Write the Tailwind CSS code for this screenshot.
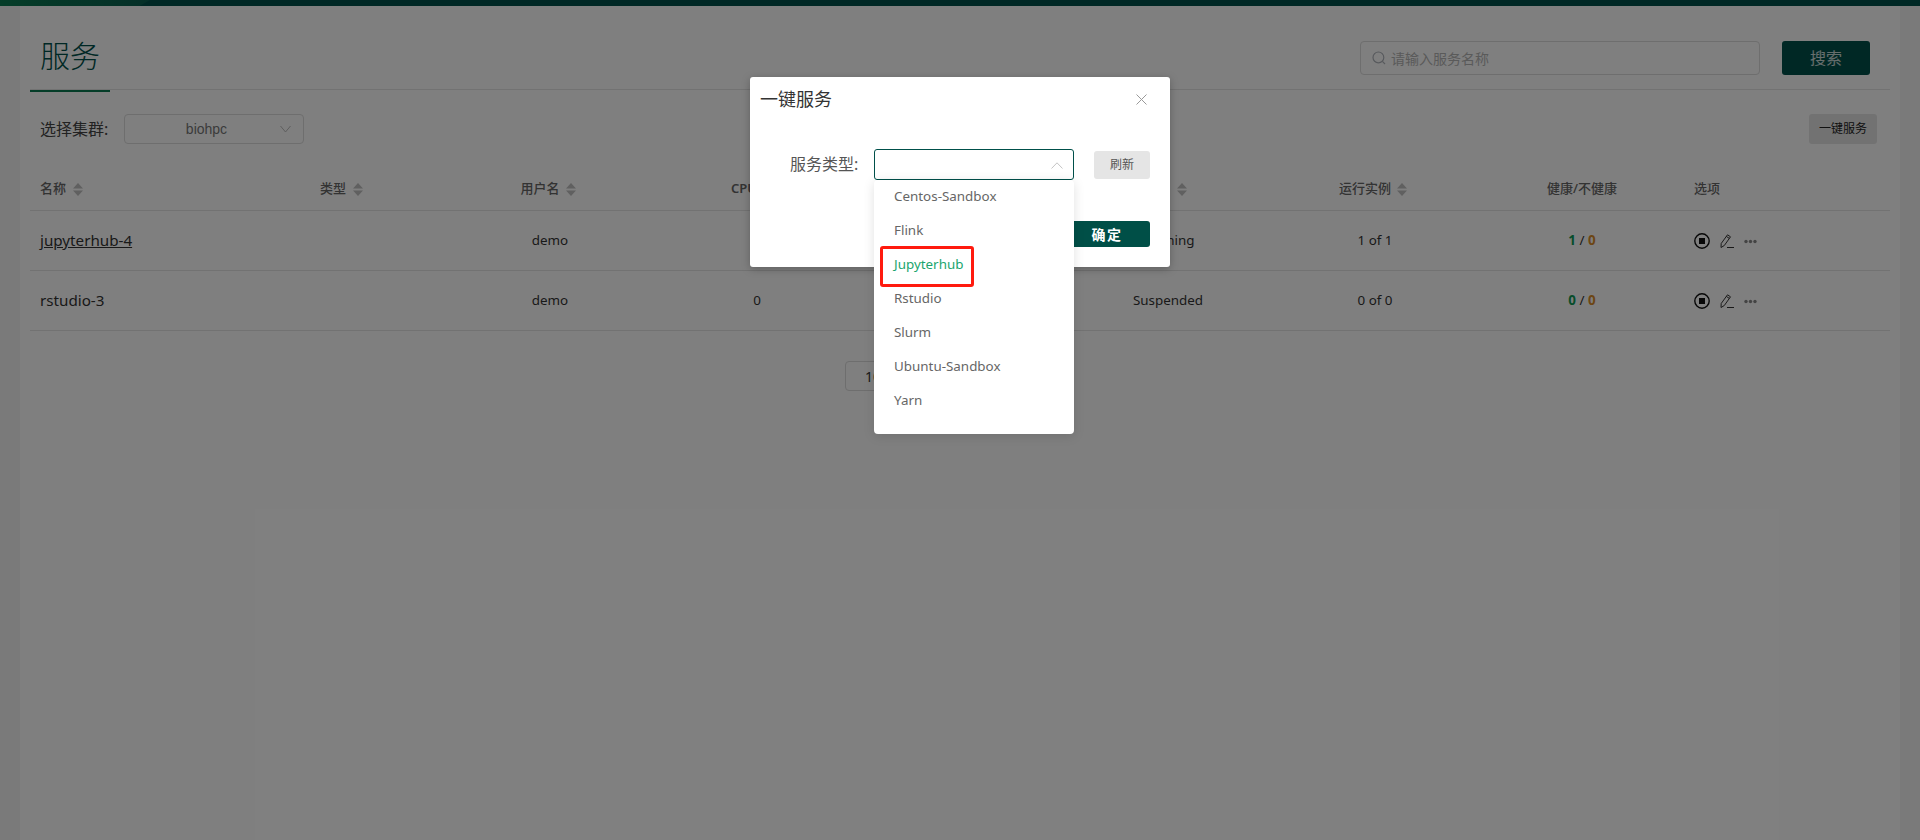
<!DOCTYPE html>
<html lang="zh">
<head>
<meta charset="utf-8">
<title>服务</title>
<script src="https://cdn.jsdelivr.net/npm/@tailwindcss/browser@4"></script>
</head>
<body class="font-['Noto_Sans','Noto_Sans_CJK_SC',sans-serif]">
<div class="relative w-[1920px] h-[840px] overflow-hidden bg-[#f5f5f5] flex flex-col">
  <div class="relative h-[6px] shrink-0 bg-[#00504a]">
    <div class="absolute left-0 top-0 h-[6px] w-[150px] bg-gradient-to-r from-[#0a7a50] to-[#0a5f50] [clip-path:polygon(0_0,100%_0,93%_100%,0_100%)]"></div>
  </div>
  <div class="flex-1 mx-[20px] bg-white px-[10px] flex flex-col">
    <div class="h-[84px] shrink-0 flex items-end justify-between border-b border-[#e4e4e4]">
      <div class="w-[80px] h-[84px] -mb-[3px] border-b-2 border-[#0a7a50] flex items-center justify-center text-[30px] leading-none pt-[14px] font-light text-[#00504a]">服务</div>
      <div class="self-start mt-[35px] mr-[20px] flex gap-[22px]">
        <div class="w-[400px] h-[34px] border border-[#dcdcdc] rounded-[4px] flex items-center pl-[11px] gap-[5px]">
          <svg class="w-[14px] h-[14px] text-[#b0b4bb]" viewBox="0 0 14 14" fill="none" stroke="currentColor" stroke-width="1.2"><circle cx="6.4" cy="6.4" r="5.4"/><path d="M10.4 10.4L13 13"/></svg>
          <span class="text-[14px] text-[#b4b4b4]">请输入服务名称</span>
        </div>
        <div class="w-[88px] h-[34px] rounded-[3px] bg-[#00504a] text-white/80 text-[16px] flex items-center justify-center">搜索</div>
      </div>
    </div>
    <div class="h-[54px] shrink-0 flex items-end justify-between pl-[10px] pr-[13px]">
      <div class="flex items-center">
        <span class="w-[84px] text-[16px] text-[#444]">选择集群:</span>
        <div class="relative w-[180px] h-[30px] border border-[#dcdcdc] rounded-[4px] flex items-center justify-center pr-[15px] text-[14px] font-['Liberation_Sans',sans-serif] text-[#777]">
          biohpc
          <svg class="absolute right-[12px] top-[10px] w-[11px] h-[8px] text-[#bbb]" viewBox="0 0 11 8" fill="none" stroke="currentColor"><path d="M0.5 1L5.5 7L10.5 1"/></svg>
        </div>
      </div>
      <div class="w-[68px] h-[30px] rounded-[3px] bg-[#e5e5e5] text-[12px] text-[#222] flex items-center justify-center">一键服务</div>
    </div>

    <div class="grid grid-cols-[280px_160px_160px_254px_240px_146px_210px_204px_206px] h-[67px] items-end border-b border-[#e4e4e4] text-[13px] font-medium text-[#666] shrink-0">
      <div class="h-[42px] pl-[10px] flex items-center gap-[7px]">名称
        <svg class="w-[10px] h-[13px] text-[#c0c0c0]" viewBox="0 0 10 13" fill="currentColor"><path d="M5 0L10 5.5H0Z"/><path d="M5 13L0 7.5H10Z"/></svg></div>
      <div class="h-[42px] pl-[10px] flex items-center gap-[7px]">类型
        <svg class="w-[10px] h-[13px] text-[#c0c0c0]" viewBox="0 0 10 13" fill="currentColor"><path d="M5 0L10 5.5H0Z"/><path d="M5 13L0 7.5H10Z"/></svg></div>
      <div class="h-[42px] flex items-center justify-center gap-[6px] pr-[4px]">用户名
        <svg class="w-[10px] h-[13px] text-[#c0c0c0]" viewBox="0 0 10 13" fill="currentColor"><path d="M5 0L10 5.5H0Z"/><path d="M5 13L0 7.5H10Z"/></svg></div>
      <div class="h-[42px] flex items-center justify-center font-semibold">CPU核数</div>
      <div class="h-[42px] flex items-center justify-center">内存</div>
      <div class="h-[42px] pl-[10px] flex items-center justify-end gap-[8px] pr-[83px]">状态
        <svg class="w-[10px] h-[13px] text-[#c0c0c0]" viewBox="0 0 10 13" fill="currentColor"><path d="M5 0L10 5.5H0Z"/><path d="M5 13L0 7.5H10Z"/></svg></div>
      <div class="h-[42px] flex items-center justify-center gap-[6px] pr-[4px]">运行实例
        <svg class="w-[10px] h-[13px] text-[#c0c0c0]" viewBox="0 0 10 13" fill="currentColor"><path d="M5 0L10 5.5H0Z"/><path d="M5 13L0 7.5H10Z"/></svg></div>
      <div class="h-[42px] flex items-center justify-center">健康/不健康</div>
      <div class="h-[42px] pl-[10px] flex items-center">选项</div>
    </div>

    <div class="grid grid-cols-[280px_160px_160px_254px_240px_146px_210px_204px_206px] h-[60px] items-center border-b border-[#e4e4e4] text-[13.4px] text-[#333] shrink-0">
      <div class="pl-[10px] text-[15.2px] underline">jupyterhub-4</div>
      <div></div>
      <div class="text-center">demo</div>
      <div class="text-center">1</div>
      <div class="text-center">2G</div>
      <div class="text-center pr-[58px]">Running</div>
      <div class="text-center">1 of 1</div>
      <div class="text-center font-bold"><span class="text-[#0f9a55]">1</span> <span class="font-normal">/</span> <span class="text-[#d98c2a]">0</span></div>
      <div class="pl-[10px] flex items-center gap-[10px]">
        <svg class="w-[16px] h-[16px]" viewBox="0 0 16 16" fill="none" stroke="#111" stroke-width="1.4"><circle cx="8" cy="8" r="7.2"/><rect x="5" y="5" width="6" height="6" fill="#111" stroke="none"/></svg>
        <svg class="w-[14px] h-[14px]" viewBox="0 0 14 14" fill="none" stroke="#333" stroke-width="1"><path d="M1 13.5L1.2 9.5L7.5 0.8L10.5 2.8L4.3 11.5Z"/><path d="M6.3 2.4L9.3 4.4"/><path d="M7 13.5H14"/></svg>
        <svg class="w-[13px] h-[16px]" viewBox="0 0 13 16" fill="#888"><circle cx="2" cy="8.5" r="1.7"/><circle cx="6.5" cy="8.5" r="1.7"/><circle cx="11" cy="8.5" r="1.7"/></svg>
      </div>
    </div>

    <div class="grid grid-cols-[280px_160px_160px_254px_240px_146px_210px_204px_206px] h-[60px] items-center border-b border-[#e4e4e4] text-[13.4px] text-[#333] shrink-0">
      <div class="pl-[10px] text-[15.2px]">rstudio-3</div>
      <div></div>
      <div class="text-center">demo</div>
      <div class="text-center">0</div>
      <div class="text-center">0G</div>
      <div class="text-center pr-[58px]">Suspended</div>
      <div class="text-center">0 of 0</div>
      <div class="text-center font-bold"><span class="text-[#0f9a55]">0</span> <span class="font-normal">/</span> <span class="text-[#d98c2a]">0</span></div>
      <div class="pl-[10px] flex items-center gap-[10px]">
        <svg class="w-[16px] h-[16px]" viewBox="0 0 16 16" fill="none" stroke="#111" stroke-width="1.4"><circle cx="8" cy="8" r="7.2"/><rect x="5" y="5" width="6" height="6" fill="#111" stroke="none"/></svg>
        <svg class="w-[14px] h-[14px]" viewBox="0 0 14 14" fill="none" stroke="#333" stroke-width="1"><path d="M1 13.5L1.2 9.5L7.5 0.8L10.5 2.8L4.3 11.5Z"/><path d="M6.3 2.4L9.3 4.4"/><path d="M7 13.5H14"/></svg>
        <svg class="w-[13px] h-[16px]" viewBox="0 0 13 16" fill="#888"><circle cx="2" cy="8.5" r="1.7"/><circle cx="6.5" cy="8.5" r="1.7"/><circle cx="11" cy="8.5" r="1.7"/></svg>
      </div>
    </div>

    <div class="mt-[30px] ml-[815px] w-[120px] h-[30px] border border-[#dcdcdc] rounded-[4px] flex items-center pl-[19px] text-[14px] text-[#333] shrink-0">10 条/页</div>
  </div>

  <div class="absolute inset-0 bg-black/50"></div>

  <div class="absolute left-[750px] top-[77px] w-[420px] h-[190px] bg-white rounded-[3px] shadow-[0_2px_8px_rgba(0,0,0,0.25)] flex flex-col">
    <div class="h-[44px] pl-[10px] pr-[23px] flex items-center justify-between shrink-0">
      <span class="text-[18px] text-[#333]">一键服务</span>
      <svg class="w-[11px] h-[11px] text-[#999]" viewBox="0 0 11 11" fill="none" stroke="currentColor" stroke-width="1"><path d="M0.5 0.5L10.5 10.5M10.5 0.5L0.5 10.5"/></svg>
    </div>
    <div class="flex items-center mt-[28px] pl-[40px] shrink-0">
      <span class="w-[84px] text-[16px] text-[#555] -mt-[2px]">服务类型:</span>
      <div class="relative w-[200px] h-[31px] border border-[#00504a] rounded-[3px]">
        <svg class="absolute right-[10px] top-[12px] w-[12px] h-[7px] text-[#c4c4c4]" viewBox="0 0 12 7" fill="none" stroke="currentColor"><path d="M0.5 6.5L6 0.8L11.5 6.5"/></svg>
      </div>
      <div class="ml-[20px] w-[56px] h-[28px] rounded-[3px] bg-[#e5e5e5] text-[12px] text-[#555] flex items-center justify-center">刷新</div>
    </div>
    <div class="flex justify-end pr-[20px] mt-[41px]">
      <div class="w-[86px] h-[26px] rounded-[3px] bg-[#004f47] text-white text-[14px] font-bold tracking-[1.5px] flex items-center justify-center">确定</div>
    </div>
  </div>

  <div class="absolute left-[874px] top-[180px] w-[200px] h-[254px] bg-white rounded-[4px] shadow-[0_2px_12px_rgba(0,0,0,0.12)] flex flex-col text-[13.4px] text-[#666]">
    <div class="h-[34px] pl-[20px] pb-[1px] flex items-center">Centos-Sandbox</div>
    <div class="h-[34px] pl-[20px] pb-[1px] flex items-center">Flink</div>
    <div class="h-[34px] pl-[20px] pb-[1px] flex items-center text-[#1aa56e]">Jupyterhub</div>
    <div class="h-[34px] pl-[20px] pb-[1px] flex items-center">Rstudio</div>
    <div class="h-[34px] pl-[20px] pb-[1px] flex items-center">Slurm</div>
    <div class="h-[34px] pl-[20px] pb-[1px] flex items-center">Ubuntu-Sandbox</div>
    <div class="h-[34px] pl-[20px] pb-[1px] flex items-center">Yarn</div>
  </div>
  <div class="absolute left-[880px] top-[246px] w-[94px] h-[41px] border-[3px] border-[#ff1a0e] rounded-[3px]"></div>
</div>
</body>
</html>
